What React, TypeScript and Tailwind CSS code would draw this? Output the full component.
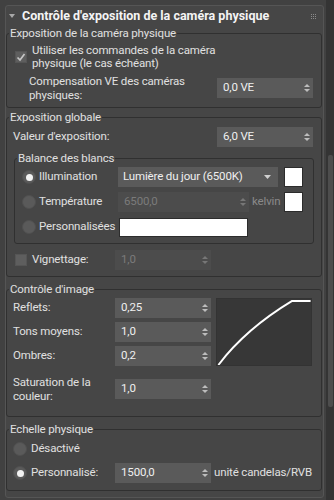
function Arrows({ dim = false }: { dim?: boolean }) {
  return (
    <svg width="6" height="10" viewBox="0 0 6 10" className="shrink-0">
      <polygon points="0,4 3,1 6,4" fill={dim ? "#777" : "#bdbdbd"} />
      <polygon points="0,6 6,6 3,9" fill={dim ? "#777" : "#bdbdbd"} />
    </svg>
  )
}

function Spinner({ value, width = "w-[96px]", dim = false }: { value: string; width?: string; dim?: boolean }) {
  return (
    <div
      className={`flex items-center h-[20px] shrink-0 pl-[6px] pr-[3px] ${width} ${
        dim ? "bg-[#4c4c4c] text-[#7b7b7b]" : "bg-[#5a5a5a] text-[#efefef]"
      }`}
    >
      <span className="flex-1">{value}</span>
      <Arrows dim={dim} />
    </div>
  )
}

function Radio({ on = false }: { on?: boolean }) {
  return (
    <div className="w-[14px] h-[14px] rounded-full bg-[#5a5a5a] border border-[#505050] flex items-center justify-center shrink-0">
      {on && <div className="w-[7px] h-[7px] rounded-full bg-[#f2f2f2]" />}
    </div>
  )
}

function Checkbox({ checked = false }: { checked?: boolean }) {
  return (
    <div className="w-[12px] h-[12px] bg-[#5e5e5e] border border-[#555] shrink-0 flex items-center justify-center">
      {checked && (
        <svg width="10" height="10" viewBox="0 0 10 10">
          <polyline points="1.5,5.5 4,8 8.5,2" fill="none" stroke="#c6c6c6" strokeWidth="1.7" />
        </svg>
      )}
    </div>
  )
}

function Swatch() {
  return <div className="w-[19px] h-[20px] bg-white border border-[#2c2c2c] shrink-0" />
}

export default function App() {
  return (
    <div className="w-[334px] h-[500px] bg-[#414141] flex overflow-hidden font-['Roboto',sans-serif] text-[11.5px] tracking-[-0.15px] text-[#e0e0e0]">
      <div className="flex-1 pl-[5px] pt-[5px] pr-[2px]">
        <div className="h-[493px] bg-[#464646] border border-[#555] rounded-[3px] flex flex-col pr-[1px]">
          {/* rollout header */}
          <div className="h-[20px] flex items-center pl-[2px] pr-[6px]">
            <svg width="6" height="5" viewBox="0 0 6 5" className="ml-[1px]">
              <polygon points="0,0 6,0 3,4" fill="#a8a8a8" />
            </svg>
            <span className="ml-[7px] flex-1 font-bold text-[12.5px] tracking-normal text-[#f4f4f4] whitespace-nowrap">
              Contrôle d'exposition de la caméra physique
            </span>
            <div className="grid grid-cols-3 gap-[1px]">
              {Array.from({ length: 9 }).map((_, i) => (
                <div key={i} className="w-[1px] h-[1px] bg-[#8a8a8a]" />
              ))}
            </div>
          </div>

          {/* Exposition de la caméra physique */}
          <fieldset className="border border-[#303030] rounded-[3px] pb-[5px]">
            <legend className="ml-[2px] px-[1px] leading-[14px]">Exposition de la caméra physique</legend>
            <div className="flex items-center mt-[4px] pl-[8px]">
              <Checkbox checked />
              <div className="ml-[5px] leading-[13px]">
                Utiliser les commandes de la caméra
                <br />
                physique (le cas échéant)
              </div>
            </div>
            <div className="flex items-center mt-[4px] pl-[22px] pr-[8px]">
              <div className="flex-1 leading-[14px]">
                Compensation VE des caméras
                <br />
                physiques:
              </div>
              <Spinner value="0,0 VE" />
            </div>
          </fieldset>

          {/* Exposition globale */}
          <fieldset className="mt-[2px] border border-[#303030] rounded-[3px] pb-[6px]">
            <legend className="ml-[2px] px-[1px] leading-[14px]">Exposition globale</legend>
            <div className="flex items-center mt-[3px] pl-[6px] pr-[8px]">
              <span className="flex-1">Valeur d'exposition:</span>
              <Spinner value="6,0 VE" />
            </div>

            <fieldset className="mt-[4px] ml-[7px] mr-[7px] border border-[#303030] rounded-[3px] pb-[6px]">
              <legend className="ml-[2px] px-[1px] leading-[14px]">Balance des blancs</legend>
              <div className="flex items-center h-[20px] mt-[2px] pl-[7px]">
                <Radio on />
                <span className="ml-[3px] w-[79px]">Illumination</span>
                <div className="w-[160px] h-[20px] bg-[#5a5a5a] flex items-center pl-[5px] pr-[7px] text-[#efefef]">
                  <span className="flex-1 whitespace-nowrap">Lumière du jour (6500K)</span>
                  <svg width="7" height="4" viewBox="0 0 7 4">
                    <polygon points="0,0 7,0 3.5,4" fill="#d0d0d0" />
                  </svg>
                </div>
                <div className="ml-[6px]">
                  <Swatch />
                </div>
              </div>
              <div className="flex items-center h-[20px] mt-[5px] pl-[7px]">
                <Radio />
                <span className="ml-[3px] w-[79px]">Température</span>
                <Spinner value="6500,0" width="w-[131px]" dim />
                <span className="ml-[3px] w-[32px] text-[#8a8a8a]">kelvin</span>
                <Swatch />
              </div>
              <div className="flex items-center h-[20px] mt-[5px] pl-[7px]">
                <Radio />
                <span className="ml-[3px] w-[80px] whitespace-nowrap">Personnalisées</span>
                <div className="w-[129px] h-[19px] bg-white border border-[#2c2c2c]" />
              </div>
            </fieldset>

            <div className="flex items-center h-[20px] mt-[6px] pl-[8px]">
              <Checkbox />
              <span className="ml-[5px] w-[83px]">Vignettage:</span>
              <Spinner value="1,0" dim />
            </div>
          </fieldset>

          {/* Contrôle d'image */}
          <fieldset className="mt-[5px] border border-[#303030] rounded-[3px] pb-[13px]">
            <legend className="ml-[2px] px-[1px] leading-[14px]">Contrôle d'image</legend>
            <div className="flex mt-[2px] pl-[6px] pr-[8px]">
              <div className="flex flex-col gap-[4px]">
                <div className="flex items-center">
                  <span className="w-[102px]">Reflets:</span>
                  <Spinner value="0,25" />
                </div>
                <div className="flex items-center">
                  <span className="w-[102px]">Tons moyens:</span>
                  <Spinner value="1,0" />
                </div>
                <div className="flex items-center">
                  <span className="w-[102px]">Ombres:</span>
                  <Spinner value="0,2" />
                </div>
              </div>
              <div className="ml-[5px] w-[96px] bg-[#373737] border border-[#333]">
                <svg width="94" height="66" viewBox="0 0 96 68" className="block">
                  <path d="M 1 68 Q 29 31 77 2 L 96 2" fill="none" stroke="#ffffff" strokeWidth="2" />
                </svg>
              </div>
            </div>
            <div className="flex items-center mt-[9px] pl-[6px]">
              <div className="w-[102px] leading-[14px]">
                Saturation de la
                <br />
                couleur:
              </div>
              <Spinner value="1,0" />
            </div>
          </fieldset>

          {/* Echelle physique */}
          <fieldset className="mt-[5px] border border-[#303030] rounded-[3px] pb-[7px]">
            <legend className="ml-[2px] px-[1px] leading-[14px]">Echelle physique</legend>
            <div className="flex items-center h-[20px] mt-[3px] pl-[6px]">
              <Radio />
              <span className="ml-[4px]">Désactivé</span>
            </div>
            <div className="flex items-center mt-[4px] pl-[6px]">
              <Radio on />
              <span className="ml-[4px] w-[84px]">Personnalisé:</span>
              <Spinner value="1500,0" />
              <span className="ml-[3px] whitespace-nowrap">unité candelas/RVB</span>
            </div>
          </fieldset>
        </div>
      </div>

      {/* scrollbar */}
      <div className="w-[8px] bg-[#343434] flex justify-center">
        <div className="mt-[155px] w-[5px] h-[252px] bg-[#4d4d4d] rounded-[2px]" />
      </div>
    </div>
  )
}
